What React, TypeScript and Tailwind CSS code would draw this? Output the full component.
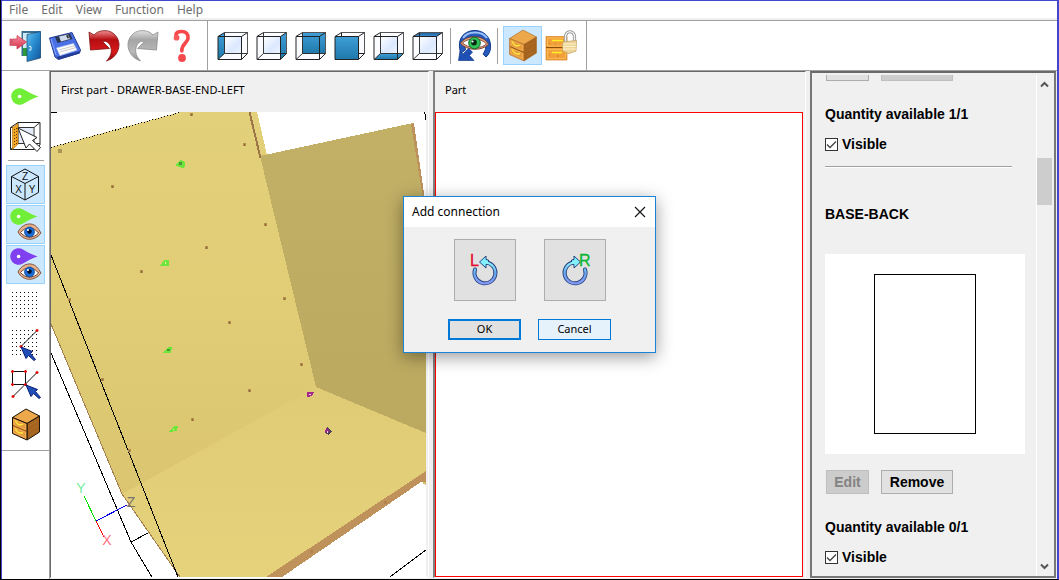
import React, { useState } from "react";

type Face = "left" | "right" | "back" | "front" | "bottom" | "top";

const facePoints: Record<Face, string> = {
  left: "1,5.5 7.5,1.5 7.5,22.5 1,28.5",
  right: "24.5,5.5 30.5,1.5 30.5,22.5 24.5,28.5",
  back: "7.5,1.5 30.5,1.5 30.5,22.5 7.5,22.5",
  front: "1,5.5 24.5,5.5 24.5,28.5 1,28.5",
  bottom: "1,28.5 7.5,22.5 30.5,22.5 24.5,28.5",
  top: "1,5.5 7.5,1.5 30.5,1.5 24.5,5.5",
};

function CubeIcon({ face }: { face: Face }) {
  const id = `cube-${face}`;
  return (
    <svg width="33" height="30" viewBox="0 0 33 30" fill="none">
      <defs>
        <linearGradient id={id} x1="0" y1="0" x2="0" y2="1">
          <stop offset="0" stopColor={face === "top" ? "#1d5e9e" : "#3f9fd8"} />
          <stop offset="1" stopColor={face === "top" ? "#3f8fd0" : "#1f78aa"} />
        </linearGradient>
        <linearGradient id={`${id}-in`} x1="0" y1="0" x2="1" y2="1">
          <stop offset="0" stopColor="#ffffff" />
          <stop offset="0.6" stopColor="#dbe8ff" />
          <stop offset="1" stopColor="#eef4ff" />
        </linearGradient>
      </defs>
      <path d="M1 5.500 7.500 1.500H30.500V22.500L24.500 28.500H1Z" fill="#fbfcff" />
      <path d="M7.500 5.500H24.500V22.500H7.500Z" fill={`url(#${id}-in)`} />
      <polygon points={facePoints[face]} fill={`url(#${id})`} />
      {face !== "front" && <path d="M7.500 1.500V22.500H30.500M7.500 22.500 1 28.500" stroke="#222" strokeWidth="0.900" />}
      {face === "front" && <path d="M7.500 1.500V5.500M24.500 22.500H30.500" stroke="#222" />}
      <path d="M7.500 1.500H30.500V22.500" stroke="#555" />
      <path d="M1 5.500H24.500V28.500H1ZM1 5.500 7.500 1.500M24.500 5.500 30.500 1.500M24.500 28.500 30.500 22.500" stroke="#222" />
    </svg>
  );
}

function ExitIcon() {
  return (
    <svg width="33" height="32" viewBox="0 0 33 32">
      <defs>
        <linearGradient id="door" x1="0" y1="0" x2="1" y2="1">
          <stop offset="0" stopColor="#63c0f2" />
          <stop offset="0.500" stopColor="#2688cc" />
          <stop offset="1" stopColor="#12539a" />
        </linearGradient>
        <linearGradient id="exit-arrow" x1="0" y1="0" x2="0" y2="1">
          <stop offset="0" stopColor="#f78c9c" />
          <stop offset="1" stopColor="#d8304c" />
        </linearGradient>
      </defs>
      <path d="M12.500 1H31.500V28L27 28V3H14V26H12.500Z" fill="#3b6f92" />
      <path d="M14 3H20V26H14Z" fill="#cfeaf5" />
      <path d="M14 18H19V26H14Z" fill="#2f9a3d" />
      <path d="M18 4.500 31.500 1.500V28L18 31.500Z" fill="url(#door)" stroke="#15466f" strokeWidth="0.700" />
      <path d="M20 16.500H22V20H20" fill="none" stroke="#d6f1ff" />
      <path d="M1 9H2.500V15.500H1ZM3.500 9H8V5.500L17.500 12 8 19V15.500H3.500Z" fill="url(#exit-arrow)" stroke="#c2384f" strokeWidth="0.700" />
    </svg>
  );
}

function SaveIcon() {
  return (
    <svg width="34" height="30" viewBox="0 0 34 30">
      <path d="M1.500 7 24 1.500 32.500 19 31.500 22 10.500 28.500 7 26Z" fill="#4a70e6" stroke="#263c96" />
      <path d="M8 26 32 20 31.500 22.500 10.500 28.500Z" fill="#233c96" />
      <path d="M7 6 22 2.500 24.500 8 9.500 12Z" fill="#29344e" />
      <path d="M11 5.500 20 3.500 22 8 13 10.500Z" fill="#cfdaeb" />
      <path d="M18 4.500 20 4 21 7 19.500 7.500Z" fill="#333" />
      <path d="M8.500 17 25.500 12.500 29 19 12 24.500Z" fill="#fff" stroke="#b7c8f2" strokeWidth="0.700" />
      <path d="m11 19 16-4.500M12 21l16-4.500" stroke="#b5b5b5" strokeWidth="0.700" />
      <path d="M3 8 8 24" stroke="#8aa8ff" />
    </svg>
  );
}

function UndoIcon({ tone }: { tone: "red" | "gray" }) {
  const red = tone === "red";
  return (
    <svg width="32" height="33" viewBox="0 0 32 33">
      <defs>
        <linearGradient id={`turn-${tone}`} x1="0" y1="0" x2="0" y2="1">
          <stop offset="0" stopColor={red ? "#f08f8f" : "#e1e1e1"} />
          <stop offset="0.300" stopColor={red ? "#b50d11" : "#a5a5a5"} />
          <stop offset="0.700" stopColor={red ? "#d91a1c" : "#b9b9b9"} />
          <stop offset="1" stopColor={red ? "#8e0508" : "#8d8d8d"} />
        </linearGradient>
      </defs>
      <g transform={red ? undefined : "translate(32 0) scale(-1 1)"}>
        <path
          d="M1 3 6 6C10 1 20 0 25.500 4.500 31 9 32.500 16 29.500 22.500 27.500 27 24 30 18.500 32 22.500 28 24 23.500 23 19 22 14 18.500 11.500 14.500 12.500L21.500 19.500 2.500 21Z"
          fill={`url(#turn-${tone})`}
          stroke={red ? "#7c0c10" : "#8c8c8c"}
          strokeWidth="0.800"
        />
      </g>
    </svg>
  );
}

function HelpIcon() {
  return (
    <svg width="18" height="34" viewBox="0 0 18 34" fill="none">
      <path d="M3.500 9C1.500 3 6 2.500 8.500 2.500 13 2.500 15.500 5 15 9.500 14.500 14 8.500 15 8.800 22" stroke="#f8484c" strokeWidth="3.600" strokeLinecap="round" />
      <circle cx="3.600" cy="8.700" r="2.900" fill="#fb5a5d" />
      <circle cx="9" cy="29" r="3.900" fill="#f5484c" />
    </svg>
  );
}

function ViewEyeIcon() {
  return (
    <svg width="34" height="34" viewBox="0 0 34 34">
      <path d="M1.500 15C2 6 9 1.500 17 1.500S32 7 32.500 16C33 22 30.500 26 28 28L25 25C28 21 28.500 17 27 14 24 9 21 7.500 16 7.500 9 7.500 5 13 7.500 21L3 24C1.500 21 1.300 18 1.500 15Z" fill="#2459bd" stroke="#12398b" />
      <path d="M5 9C10 1.500 24 1.500 29 9" fill="none" stroke="#9cc2f7" strokeWidth="2" />
      <path d="M2.500 14.500C7 5.500 26 5 30.500 15.500 24 22 9 22 2.500 14.500Z" fill="#e5a681" stroke="#6c3524" strokeWidth="0.900" />
      <path d="M4.500 14C10 8.500 23 8.500 28.500 15 23 20 11 20 4.500 14Z" fill="#fff" stroke="#6c3524" strokeWidth="0.800" />
      <circle cx="16.500" cy="14" r="5.800" fill="#2fc455" stroke="#11652f" />
      <circle cx="16" cy="13.500" r="2.900" fill="#062d14" />
      <circle cx="14.500" cy="12.500" r="1.100" fill="#fff" />
      <path d="M.500 31.500 2 22 5 25 10.500 19.500 14.500 23 11.500 26.500 16 31.500Z" fill="#1f50b4" stroke="#12398b" strokeWidth="0.700" />
    </svg>
  );
}

function CabinetIcon({ outlined = false }: { outlined?: boolean }) {
  const edge = outlined ? "#1c1207" : "#a8661f";
  return (
    <svg width="30" height="33" viewBox="0 0 30 33">
      <path d="M1.500 9.500 15 1 28.500 8 16 15.500Z" fill="#eda84c" stroke={edge} strokeWidth={outlined ? 1 : 0.6} />
      <path d="M16 15.500 28.500 8V24L16 32Z" fill="#a4641f" stroke={edge} strokeWidth={outlined ? 1 : 0.6} />
      <path d="M1.500 9.500 16 15.500V32L1.500 25.500Z" fill="#e59a3b" stroke={edge} strokeWidth={outlined ? 1 : 0.6} />
      <path d="M2 17.500 16 23.500" stroke="#7b430d" strokeWidth="0.800" />
      <path d="M3 11.500 14.500 16.500V21.500L3 16.500ZM3 19.500 14.500 24.500V29.500L3 24.500Z" fill="none" stroke="#f3b45b" strokeWidth="0.700" />
      <path d="M4.500 12.500C5 16 9 18 12 16M4.500 20.500C5 24 9 26 12 24.500" fill="none" stroke="#ffe73c" strokeWidth="1.500" />
      <path d="m18 18 8-5m-8 10 8-5m-7 9 7-4.500" stroke="#b8722e" strokeWidth="0.600" />
    </svg>
  );
}

function LockedCabinetIcon() {
  return (
    <svg width="34" height="33" viewBox="0 0 34 33">
      <path d="M1 7.500H22V31H1Z" fill="#f2a13a" stroke="#d98224" strokeWidth="0.700" />
      <path d="M1 18.500H22" stroke="#8e4c0b" />
      <path d="M2.500 9H20.500V17H2.500ZM2.500 20.500H20.500V29.500H2.500Z" fill="none" stroke="#ffbe63" strokeWidth="0.700" />
      <path d="M4 14.500h1m5 .500h1m-7 11h1m7 1h2" stroke="#cd7316" />
      <path d="M7 11.500H18M7 23.500H17" stroke="#fff02a" strokeWidth="1.400" />
      <path d="M20.500 13V8C20.500 1 29.500 1 29.500 8V13" fill="none" stroke="#888" strokeWidth="3.200" />
      <path d="M20.500 13V8C20.500 1 29.500 1 29.500 8V13" fill="none" stroke="#f1f1f1" strokeWidth="1.600" />
      <path d="M17.500 13 31.500 11.500 31 22 24 24.500 17.500 22Z" fill="#eed59c" stroke="#c39d58" strokeWidth="0.700" />
      <path d="M18 15H31M18 17.500H31M18 20H31" stroke="#fff1c2" />
    </svg>
  );
}

function Pin({ color }: { color: string }) {
  return (
    <>
      <path d="M27.500 8.500C22 10.500 17 13 13 15.500A8.300 8.300 0 1 1 13 1.500C17 4 22 6.500 27.500 8.500Z" fill={color} />
      <circle cx="8.600" cy="8.500" r="1.800" fill="#fff" />
    </>
  );
}

function PinIcon() {
  return (
    <svg width="29" height="17" viewBox="0 0 29 17">
      <Pin color="#71ee38" />
    </svg>
  );
}

function PinEyeIcon({ color }: { color: string }) {
  return (
    <svg width="32" height="34" viewBox="0 0 32 34">
      <Pin color={color} />
      <path d="M8 24C11 18 16 15.500 21 16 26 17 28 20 31 25 25 33.500 13 33.500 8 24Z" fill="#eab18d" stroke="#74452c" strokeWidth="0.900" />
      <path d="M10.500 24.500C15 18.500 24 18.500 28.500 25 24 30.500 15 30.500 10.500 24.500Z" fill="#fff" stroke="#5b3322" strokeWidth="0.900" />
      <circle cx="19.500" cy="24" r="5" fill="#176dd7" stroke="#103f88" strokeWidth="0.700" />
      <circle cx="19.500" cy="23.500" r="2.300" fill="#03112b" />
      <circle cx="18" cy="22" r="1" fill="#fff" />
    </svg>
  );
}

function PickFaceIcon() {
  return (
    <svg width="33" height="31" viewBox="0 0 33 31">
      <path d="M1.500 6.500 9 1.500H31V24L25 28.500H1.500Z" fill="#fff" stroke="#222" />
      <path d="M9.500 6.500H24V22H9.500Z" fill="#e4ecfb" />
      <path d="M9 1.500V22.500H31M1.500 6.500H25V28.500M25 6.500 31 1.500M9 22.500 1.500 28.500" fill="none" stroke="#333" />
      <path d="M3.500 6.500 9 2.500V23L3.500 28.500Z" fill="#f5a623" stroke="#a66c0c" strokeWidth="0.600" />
      <path d="M5.500 8V25M7.500 7V23" stroke="#5d3a03" strokeDasharray="1 2" />
      <path d="M9 7 28 16.500 23.500 19.500 31.500 26.500 28 30.500 20.500 23 17 27Z" fill="#fff" stroke="#222" />
    </svg>
  );
}

function AxisCubeIcon() {
  return (
    <svg width="31" height="33" viewBox="0 0 31 33" fill="none">
      <path d="M15 1 28.500 8.500V24.500L15 32 1.500 24.500V8.500ZM1.500 8.500 15 15.500 28.500 8.500M15 15.500V32" stroke="#111" />
      <g fill="#111" fontSize="10" textAnchor="middle" className="font-['Liberation_Sans',sans-serif]">
        <text x="15" y="12">Z</text>
        <text x="8.500" y="25">X</text>
        <text x="22" y="25">Y</text>
      </g>
    </svg>
  );
}

const steps = [0, 1, 2, 3, 4, 5, 6];

function Dots() {
  return (
    <g fill="#111" shapeRendering="crispEdges">
      {steps.map((r) => steps.map((c) => <rect key={`${r}-${c}`} x={2 + c * 4} y={2 + r * 4} width="1" height="1" />))}
    </g>
  );
}

function GridIcon() {
  return (
    <svg width="31" height="29" viewBox="0 0 31 29">
      <Dots />
    </svg>
  );
}

function BlueArrow({ x, y }: { x: number; y: number }) {
  return (
    <path
      transform={`translate(${x} ${y})`}
      d="M0 0 11.500 4.500 9.500 6.500 14.500 12.500 13 13.500 7.500 8.500 5 11.500Z"
      fill="#1f4fb5"
      stroke="#0b1c78"
    />
  );
}

function GridSnapIcon() {
  return (
    <svg width="31" height="33" viewBox="0 0 31 33">
      <Dots />
      <path d="M11 18.500 27 2.500" stroke="#111" />
      <path d="M9.500 18.500H12.500M11 17V20M25.500 2.500H28.500M27 1V4" stroke="#e00000" strokeWidth="1.300" />
      <BlueArrow x={11} y={19} />
    </svg>
  );
}

function ObjectSnapIcon() {
  return (
    <svg width="33" height="31" viewBox="0 0 33 31">
      <path d="M3.500 2.500H16.500V15.500H3.500ZM4 27.500 28 3.500" fill="none" stroke="#111" />
      <path
        d="M2 2.500H5M3.500 1V4M15 2.500H18M16.500 1V4M2 15.500H5M3.500 14V17M15 15.500H18M16.500 14V17M26.500 3.500H29.500M28 2V5M2.500 27.500H5.500M4 26V29"
        stroke="#e00000"
        strokeWidth="1.300"
      />
      <BlueArrow x={17} y={16} />
    </svg>
  );
}

function RotateIcon({ side }: { side: "L" | "R" }) {
  const left = side === "L";
  return (
    <svg width="32" height="40" viewBox="0 -4 32 40" fill="none">
      <defs>
        <linearGradient id={`ring-${side}`} x1="0" y1="0" x2="0" y2="1">
          <stop offset="0" stopColor="#8df4ff" />
          <stop offset="0.500" stopColor="#69a9ef" />
          <stop offset="1" stopColor="#8398f0" />
        </linearGradient>
      </defs>
      <g transform={left ? undefined : "translate(32 0) scale(-1 1)"}>
        <path d="M6 15.500A10.500 10.500 0 1 0 18 8.500" stroke="#26417f" strokeWidth="4" strokeLinecap="round" />
        <path d="M10.500 8 17 2V5.500L19.500 6V10L17 10.500V14Z" fill="#7ef0ff" stroke="#26417f" />
        <path d="M6 15.500A10.500 10.500 0 1 0 17 8.500" stroke={`url(#ring-${side})`} strokeWidth="2.200" strokeLinecap="round" />
      </g>
      <text x={left ? 1 : 20} y="12" fontSize="16" stroke={left ? "#e40a2d" : "#08b62f"} strokeWidth="0.300" fill={left ? "#e40a2d" : "#08b62f"} className="font-['Liberation_Sans',sans-serif]">
        {side}
      </text>
    </svg>
  );
}

const holes = [
  [140, 2], [8, 38], [193, 32], [61, 74], [214, 112], [155, 135], [90, 159], [18, 187], [233, 186], [178, 210],
  [250, 252], [198, 278], [141, 307], [51, 267], [78, 338],
];

function Scene() {
  return (
    <svg className="block h-full w-full" viewBox="0 0 375 465" preserveAspectRatio="xMinYMin slice" fill="none">
      <defs>
        <linearGradient id="side" x1="0" y1="0" x2="0" y2="1">
          <stop offset="0" stopColor="#e3d07a" />
          <stop offset="0.500" stopColor="#e0cd76" />
          <stop offset="1" stopColor="#dbc570" />
        </linearGradient>
        <linearGradient id="floor" x1="0" y1="0" x2="0" y2="1">
          <stop offset="0" stopColor="#dfcb75" />
          <stop offset="1" stopColor="#e6d27b" />
        </linearGradient>
        <linearGradient id="rear" x1="0" y1="0" x2="0" y2="1">
          <stop offset="0" stopColor="#c2b067" />
          <stop offset="1" stopColor="#bba95f" />
        </linearGradient>
      </defs>
      <g shapeRendering="crispEdges">
        <polygon points="0,35 129,0 206,0 216,43 209,44 265,275 71,382 0,212" fill="url(#side)" />
        <polygon points="71,382 265,275 375,320 375,359 215,465 129,465" fill="url(#floor)" />
        <polygon points="209,44 362,11 375,98 375,321 265,275" fill="url(#rear)" />
        <polygon points="360,12 363,11 375,95 375,105" fill="#bd925c" />
        <polygon points="375,359 375,370 370,370 231,465 215,465" fill="#bf925b" />
        <path d="M372 371H375V373" stroke="#d3bd68" strokeWidth="2" />
        <path d="M198.500 0 209.500 46" stroke="#9c7548" strokeWidth="2" />
        <path d="M0 212 71 382 129 465" stroke="#a47e4c" />
        <path d="M0 35.500 129 .500" stroke="#000" strokeDasharray="1 2" />
        <path d="M0 143 127 465M0 241 80 430 101 465M80 430 97 421M339 465 375 438M0 .500H6M373.500 0V2M374.500 2V8" stroke="#000" />
        <path d="M45 409 33 384" stroke="#00e000" />
        <path d="M45 409 53 425" stroke="#f00000" />
        <path d="M45 409 76 393" stroke="#0000e0" />
        {holes.map(([x, y]) => (
          <g key={`${x}-${y}`}>
            <rect x={x - 1} y={y - 1} width="3" height="3" fill="#b08d4e" />
            <rect x={x} y={y} width="1" height="2" fill="#94683a" />
          </g>
        ))}
        <rect x="7" y="37" width="4" height="4" fill="#ab9555" />
        <rect x="333" y="389" width="3" height="3" fill="#b0834b" />
        <rect x="259" y="438" width="3" height="3" fill="#b0834b" />
        <path d="M124 53 130 48 134 50V55L131 56ZM109 154 113 148 118 148V154ZM111 241 117 235 121 235 120 241ZM117 320 124 314 127 314 126 319Z" fill="#6ee53a" />
        <path d="M128 50H131V53H128ZM116 237H119V239H116Z" fill="#4b9834" />
        <path d="M114 150H115V152H114ZM122 317H123V318H122Z" fill="#e6f7a0" />
        <path d="M256 280 263 280 261 284 256 285Z" fill="#a3288a" />
        <path d="M276 315 281 319 278 323 274 321Z" fill="#55425a" />
        <path d="M275 316 278 319 276 322 274 320Z" fill="#9c218c" />
        <path d="M258 282H260V283H258ZM276 319H277V321H276Z" fill="#f0d0e8" />
      </g>
      <g fontSize="14" textAnchor="middle" className="font-['Liberation_Sans',sans-serif]">
        <text x="30" y="381" fill="#78eba0">Y</text>
        <text x="56" y="433" fill="#ff7083">X</text>
        <text x="80" y="395" fill="#77726f">Z</text>
      </g>
    </svg>
  );
}

function ToolButton({ label, active = false, children }: { label: string; active?: boolean; children: React.ReactNode }) {
  return (
    <button
      type="button"
      aria-label={label}
      aria-pressed={active}
      className={`flex size-[39px] shrink-0 items-center justify-center border ${
        active ? "border-[#99d1ff] bg-[#cce8ff]" : "border-transparent"
      }`}
    >
      {children}
    </button>
  );
}

const menus = ["File", "Edit", "View", "Function", "Help"];
const faces: Face[] = ["left", "right", "back", "front", "bottom", "top"];

function Availability({ id, count }: { id: string; count: string }) {
  const [visible, setVisible] = useState(true);
  return (
    <div>
      <p className="h-5 leading-5">Quantity available {count}</p>
      <div className="mt-[10px] flex h-5 items-center gap-1">
        <span className="grid size-[13px] place-items-center">
          <input
            id={id}
            type="checkbox"
            checked={visible}
            onChange={(e) => setVisible(e.target.checked)}
            className="col-start-1 row-start-1 size-[13px] appearance-none border border-[#333] bg-white"
          />
          {visible && (
            <svg width="11" height="11" viewBox="0 0 11 11" className="pointer-events-none col-start-1 row-start-1" fill="none">
              <path d="M1 5.500 4 8.500 10 2.500" stroke="#444" strokeWidth="1.300" />
            </svg>
          )}
        </span>
        <label htmlFor={id}>Visible</label>
      </div>
    </div>
  );
}

function PartsPanel() {
  return (
    <aside className="flex min-h-0 border-2 border-[#777] border-t-[#696969] bg-[#f0f0f0] pt-[2px] pr-[2px]">
      <div className="min-w-0 flex-1 overflow-hidden pl-[13px] font-['Liberation_Sans',sans-serif] text-sm font-bold text-black">
        <div className="flex h-[6px] items-end gap-3 overflow-hidden pl-px">
          <button type="button" aria-label="Edit part" className="h-6 w-[43px] border border-[#adadad] bg-[#e1e1e1]" />
          <button type="button" aria-label="Remove part" disabled className="h-6 w-[72px] border border-[#bfbfbf] bg-[#ccc]" />
        </div>
        <div className="pt-[23px]">
          <Availability id="visible-first" count="1/1" />
        </div>
        <hr className="mt-3 mr-6 border-t border-b border-t-[#a0a0a0] border-b-white" />
        <h2 className="mt-[36px] h-5 leading-5">BASE-BACK</h2>
        <div className="mt-[30px] flex size-[200px] items-center justify-center bg-white">
          <div className="h-40 w-[102px] border border-black" />
        </div>
        <div className="mt-4 flex gap-3 pl-px">
          <button type="button" disabled className="h-6 w-[43px] border border-[#bfbfbf] bg-[#ccc] text-[#838383]">
            Edit
          </button>
          <button type="button" className="h-6 w-[72px] border border-[#adadad] bg-[#e1e1e1]">
            Remove
          </button>
        </div>
        <div className="pt-[23px]">
          <Availability id="visible-second" count="0/1" />
        </div>
      </div>
      <div className="flex w-4 shrink-0 flex-col items-center border-l border-white">
        <svg width="9" height="18" viewBox="0 0 9 18" fill="none">
          <path d="M1 11.500 4.500 8 8 11.500" stroke="#555" strokeWidth="2" />
        </svg>
        <div className="mt-[65px] h-[47px] w-full bg-[#cdcdcd]" />
        <svg width="9" height="18" viewBox="0 0 9 18" fill="none" className="mt-auto">
          <path d="M1 6.500 4.500 10 8 6.500" stroke="#555" strokeWidth="2" />
        </svg>
      </div>
    </aside>
  );
}

function ConnectionDialog() {
  return (
    <div
      role="dialog"
      aria-labelledby="dialog-title"
      className="absolute inset-x-0 top-[196px] mx-auto w-[253px] border border-[#1883d7] bg-[#f0f0f0] shadow-[0_4px_16px_rgba(0,0,0,0.4)]"
    >
      <div className="flex h-[30px] items-center justify-between bg-white pr-[9px] pl-2">
        <h1 id="dialog-title" className="text-xs">
          Add connection
        </h1>
        <button type="button" aria-label="Close">
          <svg width="12" height="12" viewBox="0 0 12 12">
            <path d="m1 1 10 10M11 1 1 11" stroke="#111" strokeWidth="1.100" />
          </svg>
        </button>
      </div>
      <div className="grid grid-cols-[73px_73px] justify-center gap-x-[17px] gap-y-[18px] pt-3 pb-3 text-[11px]">
        <button type="button" aria-label="Rotate left" className="flex size-[62px] items-center justify-center justify-self-center border border-[#adadad] bg-[#e1e1e1]">
          <RotateIcon side="L" />
        </button>
        <button type="button" aria-label="Rotate right" className="flex size-[62px] items-center justify-center justify-self-center border border-[#adadad] bg-[#e1e1e1]">
          <RotateIcon side="R" />
        </button>
        <button type="button" className="flex h-[21px] items-center justify-center border-2 border-[#0078d7] bg-[#e1e1e1]">
          OK
        </button>
        <button type="button" className="flex h-[21px] items-center justify-center border border-[#0078d7] bg-[#e5f1fb]">
          Cancel
        </button>
      </div>
    </div>
  );
}

export default function App() {
  return (
    <div className="relative flex h-screen flex-col overflow-hidden border-r border-b border-l border-black border-r-[#3f48cc] bg-white font-['Noto_Sans',sans-serif] text-black">
      <div className="flex min-h-0 flex-1 flex-col border-t border-r border-l border-[#3f48cc]">
        <nav className="flex h-[17px] items-center gap-[13px] pl-[7px] text-xs text-[#6d6d6d]">
          {menus.map((m) => (
            <button type="button" key={m} className="leading-4">
              {m}
            </button>
          ))}
        </nav>
        <div className="h-[3px] border-b border-[#a0a0a0] bg-[#f0f0f0]" />
        <div className="flex h-[50px] shrink-0 items-center border-b border-[#a0a0a0] pl-1">
          <ToolButton label="Exit"><ExitIcon /></ToolButton>
          <ToolButton label="Save"><SaveIcon /></ToolButton>
          <ToolButton label="Undo"><UndoIcon tone="red" /></ToolButton>
          <ToolButton label="Redo"><UndoIcon tone="gray" /></ToolButton>
          <ToolButton label="Help"><HelpIcon /></ToolButton>
          <div className="mx-[6px] w-px self-stretch bg-[#a0a0a0]" />
          {faces.map((f) => (
            <ToolButton key={f} label={`View ${f}`}><CubeIcon face={f} /></ToolButton>
          ))}
          <div className="mr-1 ml-[2px] h-9 w-px bg-[#a0a0a0]" />
          <ToolButton label="Reset view"><ViewEyeIcon /></ToolButton>
          <div className="mr-[5px] ml-[3px] h-9 w-px bg-[#a0a0a0]" />
          <ToolButton label="Show cabinet" active><CabinetIcon /></ToolButton>
          <ToolButton label="Lock cabinet"><LockedCabinetIcon /></ToolButton>
          <div className="ml-[5px] w-px self-stretch bg-[#a0a0a0]" />
        </div>
        <div className="flex min-h-0 flex-1">
          <div className="w-12 shrink-0 border-r border-[#a0a0a0]">
            <div className="flex flex-col items-center gap-px border-b border-[#a0a0a0] pt-[6px] pb-[6px]">
              <ToolButton label="Add connector"><PinIcon /></ToolButton>
              <ToolButton label="Select face"><PickFaceIcon /></ToolButton>
              <div className="my-[3px] h-px w-9 bg-[#a0a0a0]" />
              <ToolButton label="Axes" active><AxisCubeIcon /></ToolButton>
              <ToolButton label="Show green connectors" active><PinEyeIcon color="#71ee38" /></ToolButton>
              <ToolButton label="Show purple connectors" active><PinEyeIcon color="#8040f0" /></ToolButton>
              <ToolButton label="Grid"><GridIcon /></ToolButton>
              <ToolButton label="Snap to grid"><GridSnapIcon /></ToolButton>
              <ToolButton label="Snap to object"><ObjectSnapIcon /></ToolButton>
              <ToolButton label="Cabinet"><CabinetIcon outlined /></ToolButton>
            </div>
          </div>
          <main className="grid min-w-0 flex-1 grid-cols-[379fr_373fr_246px] grid-rows-[minmax(0,1fr)] gap-x-1 bg-[#f0f0f0] pr-px pb-px">
            <section className="flex min-h-0 min-w-0 flex-col border-t border-r border-b border-l border-t-[#696969] border-r-white border-b-white border-l-[#696969] bg-[#f0f0f0]">
              <h2 className="h-10 shrink-0 pl-[10px] text-[11px] leading-[36px]">First part - DRAWER-BASE-END-LEFT</h2>
              <div className="mr-[2px] min-h-0 flex-1 overflow-hidden bg-white">
                <Scene />
              </div>
            </section>
            <section className="flex min-h-0 min-w-0 flex-col border-t border-r border-b border-l-2 border-t-[#696969] border-r-white border-b-white border-l-[#808080] bg-[#f0f0f0]">
              <h2 className="h-10 shrink-0 pl-[10px] text-[11px] leading-[36px]">Part</h2>
              <div className="mr-[2px] min-h-0 flex-1 border border-[#f00] bg-white" />
            </section>
            <PartsPanel />
          </main>
        </div>
      </div>
      <ConnectionDialog />
    </div>
  );
}
